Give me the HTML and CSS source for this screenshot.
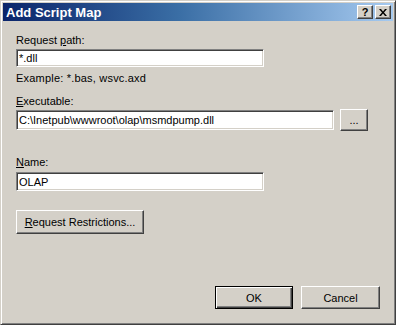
FILE: index.html
```html
<!DOCTYPE html>
<html lang="en">
<head>
    <meta charset="UTF-8">
    <title>Add Script Map</title>
    <link rel="stylesheet" href="styles.css">
</head>
<body>
    <div class="window">
        <div class="titlebar">
            <span class="title">Add Script Map</span>
            <div class="title-buttons">
                <span class="tbtn">?</span>
                <span class="tbtn close">
                    <svg width="8" height="7" viewBox="0 0 8 7"><path d="M0 0h2l2 2.5L6 0h2L5 3.5 8 7H6L4 4.5 2 7H0l3-3.5z" fill="#000"/></svg>
                </span>
            </div>
        </div>
        <div class="content">
            <div class="label first">Request <u>p</u>ath:</div>
            <div class="field short">*.dll</div>
            <div class="hint">Example: *.bas, wsvc.axd</div>
            <div class="label exe"><u>E</u>xecutable:</div>
            <div class="row">
                <div class="field long">C:\Inetpub\wwwroot\olap\msmdpump.dll</div>
                <div class="button browse">...</div>
            </div>
            <div class="label name"><u>N</u>ame:</div>
            <div class="field short name-field">OLAP</div>
            <div class="button restrictions"><u>R</u>equest Restrictions...</div>
            <div class="footer">
                <div class="button default">OK</div>
                <div class="button">Cancel</div>
            </div>
        </div>
    </div>
</body>
</html>
```

FILE: styles.css
```css
body {
    margin: 0;
    padding: 0;
    font-family: Tahoma, 'Liberation Sans', Arial, sans-serif;
    font-size: 11px;
    color: #000;
    background: #d4d0c8;
}

.window {
    width: 396px;
    height: 325px;
    box-sizing: border-box;
    background: #d4d0c8;
    border-top: 1px solid #d4d0c8;
    border-left: 1px solid #d4d0c8;
    border-right: 1px solid #404040;
    border-bottom: 1px solid #404040;
    box-shadow: inset 1px 1px 0 #fff, inset -1px -1px 0 #808080;
    padding: 2px;
    display: flex;
    flex-direction: column;
}

.titlebar {
    height: 18px;
    background: linear-gradient(to right, #0a246a, #3a6ea5 45%, #a6caf0);
    display: flex;
    align-items: center;
    justify-content: space-between;
    padding: 0 2px 0 3px;
}

.title {
    color: #fff;
    font-weight: bold;
    font-size: 13px;
}

.title-buttons {
    display: flex;
    gap: 2px;
}

.tbtn {
    width: 16px;
    height: 14px;
    box-sizing: border-box;
    background: #d4d0c8;
    border-top: 1px solid #fff;
    border-left: 1px solid #fff;
    border-right: 1px solid #404040;
    border-bottom: 1px solid #404040;
    box-shadow: inset -1px -1px 0 #808080;
    display: flex;
    align-items: center;
    justify-content: center;
    font-weight: bold;
    font-size: 11px;
    line-height: 12px;
}

.content {
    flex: 1;
    padding: 0 0 0 13px;
    display: flex;
    flex-direction: column;
    align-items: flex-start;
}

.label, .hint {
    line-height: 13px;
    height: 13px;
}

.hint {
    letter-spacing: 0.2px;
}

.label.first {
    margin-top: 13px;
}

.field {
    box-sizing: border-box;
    background: #fff;
    border-top: 1px solid #808080;
    border-left: 1px solid #808080;
    border-right: 1px solid #fff;
    border-bottom: 1px solid #fff;
    box-shadow: inset 1px 1px 0 #404040, inset -1px -1px 0 #d4d0c8;
    padding: 0 2px;
    display: flex;
    align-items: center;
    white-space: nowrap;
}

.field.short {
    width: 248px;
    height: 18px;
    margin-top: 2px;
}

.hint {
    margin-top: 5px;
}

.label.exe {
    margin-top: 10px;
}

.row {
    display: flex;
    gap: 6px;
    margin-top: 2px;
}

.field.long {
    width: 318px;
    height: 20px;
}

.label.name {
    margin-top: 25px;
}

.field.name-field {
    height: 19px;
    margin-top: 3px;
}

.button {
    box-sizing: border-box;
    background: #d4d0c8;
    border-top: 1px solid #fff;
    border-left: 1px solid #fff;
    border-right: 1px solid #404040;
    border-bottom: 1px solid #404040;
    box-shadow: inset -1px -1px 0 #808080;
    display: flex;
    align-items: center;
    justify-content: center;
    white-space: nowrap;
}

.browse {
    width: 28px;
    height: 22px;
    margin-top: -1px;
}

.restrictions {
    width: 128px;
    height: 24px;
    margin-top: 19px;
}

.footer {
    margin-top: auto;
    margin-bottom: 13px;
    align-self: flex-end;
    margin-right: 13px;
    display: flex;
    gap: 8px;
}

.footer .button {
    width: 79px;
    height: 23px;
}

.footer .button.default {
    border: 1px solid #000;
    box-shadow: inset 1px 1px 0 #fff, inset -1px -1px 0 #404040, inset -2px -2px 0 #808080;
    width: 78px;
}
```
